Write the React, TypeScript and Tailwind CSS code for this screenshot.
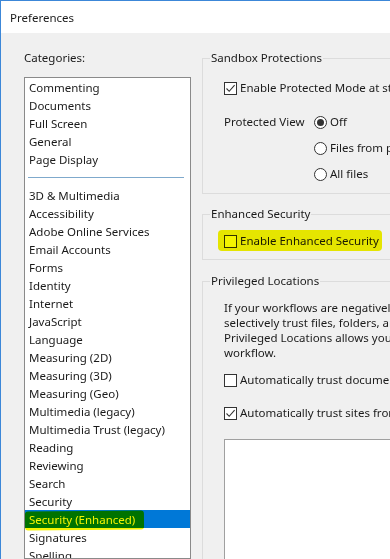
import React from 'react';

const categoriesTop = ['Commenting', 'Documents', 'Full Screen', 'General', 'Page Display'];
const categoriesBottom = [
  '3D & Multimedia',
  'Accessibility',
  'Adobe Online Services',
  'Email Accounts',
  'Forms',
  'Identity',
  'Internet',
  'JavaScript',
  'Language',
  'Measuring (2D)',
  'Measuring (3D)',
  'Measuring (Geo)',
  'Multimedia (legacy)',
  'Multimedia Trust (legacy)',
  'Reading',
  'Reviewing',
  'Search',
  'Security',
  'Security (Enhanced)',
  'Signatures',
  'Spelling',
];

const Check = ({ checked }: { checked?: boolean }) => (
  <span className="w-[13px] h-[13px] shrink-0 border border-[#333] bg-white flex items-center justify-center">
    {checked && (
      <svg width="11" height="11" viewBox="0 0 11 11">
        <path d="M1.5 5.5 L4.2 8.3 L9.6 2.2" fill="none" stroke="#333" strokeWidth="1.1" />
      </svg>
    )}
  </span>
);

const Radio = ({ checked }: { checked?: boolean }) => (
  <span className="w-[13px] h-[13px] shrink-0 rounded-full border border-[#333] bg-white flex items-center justify-center">
    {checked && <span className="w-[7px] h-[7px] rounded-full bg-[#333]" />}
  </span>
);

const Group = ({ title, className, children }: { title: string; className?: string; children: React.ReactNode }) => (
  <fieldset className={`w-[260px] border border-[#dcdcdc] ${className ?? ''}`}>
    <legend className="ml-[7px] px-[1px] leading-[16px]">{title}</legend>
    <div className="pl-[21px]">{children}</div>
  </fieldset>
);

export default function App() {
  return (
    <div
      className="w-[390px] h-[559px] overflow-hidden bg-[#f0f0f0] border-t border-l border-[#3c87d8] text-[11.5px] text-[#1a1a1a] flex flex-col"
      style={{ fontFamily: '"Noto Sans", "Open Sans", sans-serif' }}
    >
      <div className="h-[32px] shrink-0 bg-white flex items-center pl-[9px] pt-[1px]">Preferences</div>

      <div className="flex flex-1 min-h-0">
        {/* left: categories */}
        <div className="w-[190px] shrink-0 pl-[23px] pt-[17px] flex flex-col">
          <div className="leading-[16px] mb-[11px]">Categories:</div>
          <div className="flex-1 bg-white border border-[#8a8a8a] overflow-hidden">
            {categoriesTop.map((c) => (
              <div key={c} className="h-[18px] leading-[19px] pl-[4px] whitespace-nowrap">{c}</div>
            ))}
            <div className="h-[18px] flex items-center pl-[3px] pr-[6px]">
              <div className="h-px w-full bg-[#7fa9cc]" />
            </div>
            {categoriesBottom.map((c) => {
              const sel = c === 'Security (Enhanced)';
              return (
                <div
                  key={c}
                  className={`relative h-[18px] leading-[19px] pl-[4px] whitespace-nowrap ${sel ? 'bg-[#0078d7] text-white' : ''}`}
                >
                  {c}
                  {sel && (
                    <span className="absolute left-0 top-[1px] w-[119px] h-[19px] bg-[#f4f400] mix-blend-multiply rounded-[3px] -rotate-[0.6deg]" />
                  )}
                </div>
              );
            })}
          </div>
        </div>

        {/* right: settings */}
        <div className="flex-1 min-w-0 overflow-hidden pl-[11px] pt-[17px] whitespace-nowrap">
          <Group title="Sandbox Protections">
            <div className="pt-[13px] pb-[10px]">
              <div className="h-[18px] flex items-center gap-[3px]">
                <Check checked />
                <span>Enable Protected Mode at startup</span>
              </div>
              <div className="flex mt-[16px]">
                <div className="w-[90px] h-[18px] leading-[18px]">Protected View</div>
                <div className="flex flex-col gap-[8px]">
                  <div className="h-[18px] flex items-center gap-[3px]">
                    <Radio checked />
                    <span>Off</span>
                  </div>
                  <div className="h-[18px] flex items-center gap-[3px]">
                    <Radio />
                    <span>Files from potentially unsafe locations</span>
                  </div>
                  <div className="h-[18px] flex items-center gap-[3px]">
                    <Radio />
                    <span>All files</span>
                  </div>
                </div>
              </div>
            </div>
          </Group>

          <Group title="Enhanced Security" className="mt-[12px]">
            <div className="pt-[10px] pb-[9px]">
              <div className="relative h-[18px] flex items-center gap-[3px]">
                <span className="absolute -left-[6px] -top-[2px] w-[164px] h-[21px] bg-[#f4f400] mix-blend-multiply rounded-[4px]" />
                <Check />
                <span>Enable Enhanced Security</span>
              </div>
            </div>
          </Group>

          <Group title="Privileged Locations" className="mt-[13px] h-[400px]">
            <div className="pt-[11px]">
              <p className="leading-[15px]">
                If your workflows are negatively affected by security settings, use Privileged Locations to
                <br />
                selectively trust files, folders, and hosts to bypass those security setting restrictions.
                <br />
                Privileged Locations allows you to work securely while granting trust to items in your
                <br />
                workflow.
              </p>
              <div className="h-[18px] flex items-center gap-[3px] mt-[11px]">
                <Check />
                <span>Automatically trust documents with valid certification</span>
              </div>
              <div className="h-[18px] flex items-center gap-[3px] mt-[15px]">
                <Check checked />
                <span>Automatically trust sites from my Win OS security zones</span>
              </div>
              <div className="mt-[17px] h-[200px] w-[300px] bg-white border border-[#a0a0a0]" />
            </div>
          </Group>
        </div>
      </div>
    </div>
  );
}
